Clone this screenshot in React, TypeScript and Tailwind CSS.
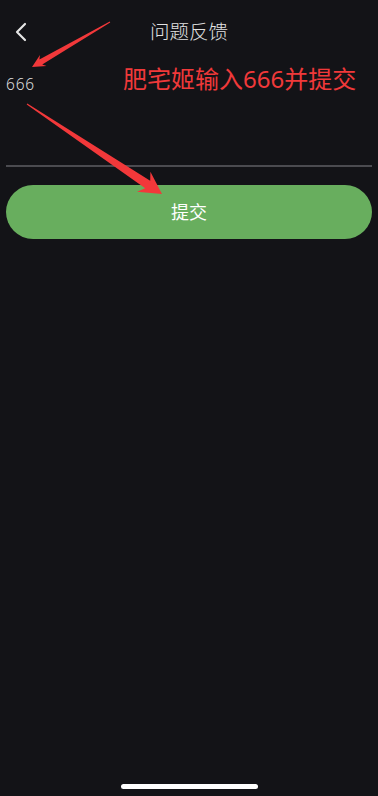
import { ChevronLeft } from "lucide-react";

type Pt = [number, number];

// builds a tapered annotation arrow (thin tail, wide head)
function arrowPoints(tail: Pt, tip: Pt, headLen: number, headHalf: number, shaftHalf: number) {
	const dx = tip[0] - tail[0];
	const dy = tip[1] - tail[1];
	const len = Math.hypot(dx, dy);
	const ux = dx / len;
	const uy = dy / len;
	const nx = -uy;
	const ny = ux;
	const bx = tip[0] - ux * headLen;
	const by = tip[1] - uy * headLen;
	const nbx = tip[0] - ux * headLen * 0.78;
	const nby = tip[1] - uy * headLen * 0.78;
	const pts: Pt[] = [
		[tail[0] + nx * 0.5, tail[1] + ny * 0.5],
		[nbx + nx * shaftHalf, nby + ny * shaftHalf],
		[bx + nx * headHalf, by + ny * headHalf],
		tip,
		[bx - nx * headHalf, by - ny * headHalf],
		[nbx - nx * shaftHalf, nby - ny * shaftHalf],
		[tail[0] - nx * 0.5, tail[1] - ny * 0.5],
	];
	return pts.map((p) => `${p[0].toFixed(1)},${p[1].toFixed(1)}`).join(" ");
}

export default function App() {
	return (
		<div
			className="relative flex h-[796px] w-[378px] flex-col overflow-hidden bg-[#131317]"
			style={{ fontFamily: '"Noto Sans", "Noto Sans CJK SC", sans-serif' }}
		>
			{/* Header */}
			<div className="relative flex h-[64px] items-center justify-center">
				<button className="absolute left-[5px] top-[16px] text-[#e6e6e6]">
					<ChevronLeft size={32} strokeWidth={1.6} />
				</button>
				<h1 className="text-[19.5px] font-light text-[#e2e2e2]">问题反馈</h1>
			</div>

			{/* Feedback input */}
			<div className="mx-[6px] h-[103px] border-b-2 border-[#4b4b50] pt-[9px]">
				<p className="text-[15.5px] font-light tracking-[0.8px] text-[#dcdcdc]">666</p>
			</div>

			<button className="mx-[6px] mt-[18px] flex h-[54px] items-center justify-center rounded-full bg-[#68ae5e] text-[18px] text-white">
				提交
			</button>

			<div className="flex-1" />

			{/* Home indicator */}
			<div className="mb-[7px] flex justify-center">
				<div className="h-[5px] w-[137px] rounded-full bg-white" />
			</div>

			{/* Annotation overlay */}
			<p className="absolute left-[123px] top-[63px] text-[24px] leading-[32px] text-[#f0393a]">
				肥宅姬输入666并提交
			</p>
			<svg className="pointer-events-none absolute left-0 top-0" width={378} height={796}>
				<polygon points={arrowPoints([110, 22], [32, 67], 13, 6.5, 2.8)} fill="#f2383a" />
				<polygon points={arrowPoints([27, 104], [162, 194], 22, 12, 4.5)} fill="#f2383a" />
			</svg>
		</div>
	);
}
